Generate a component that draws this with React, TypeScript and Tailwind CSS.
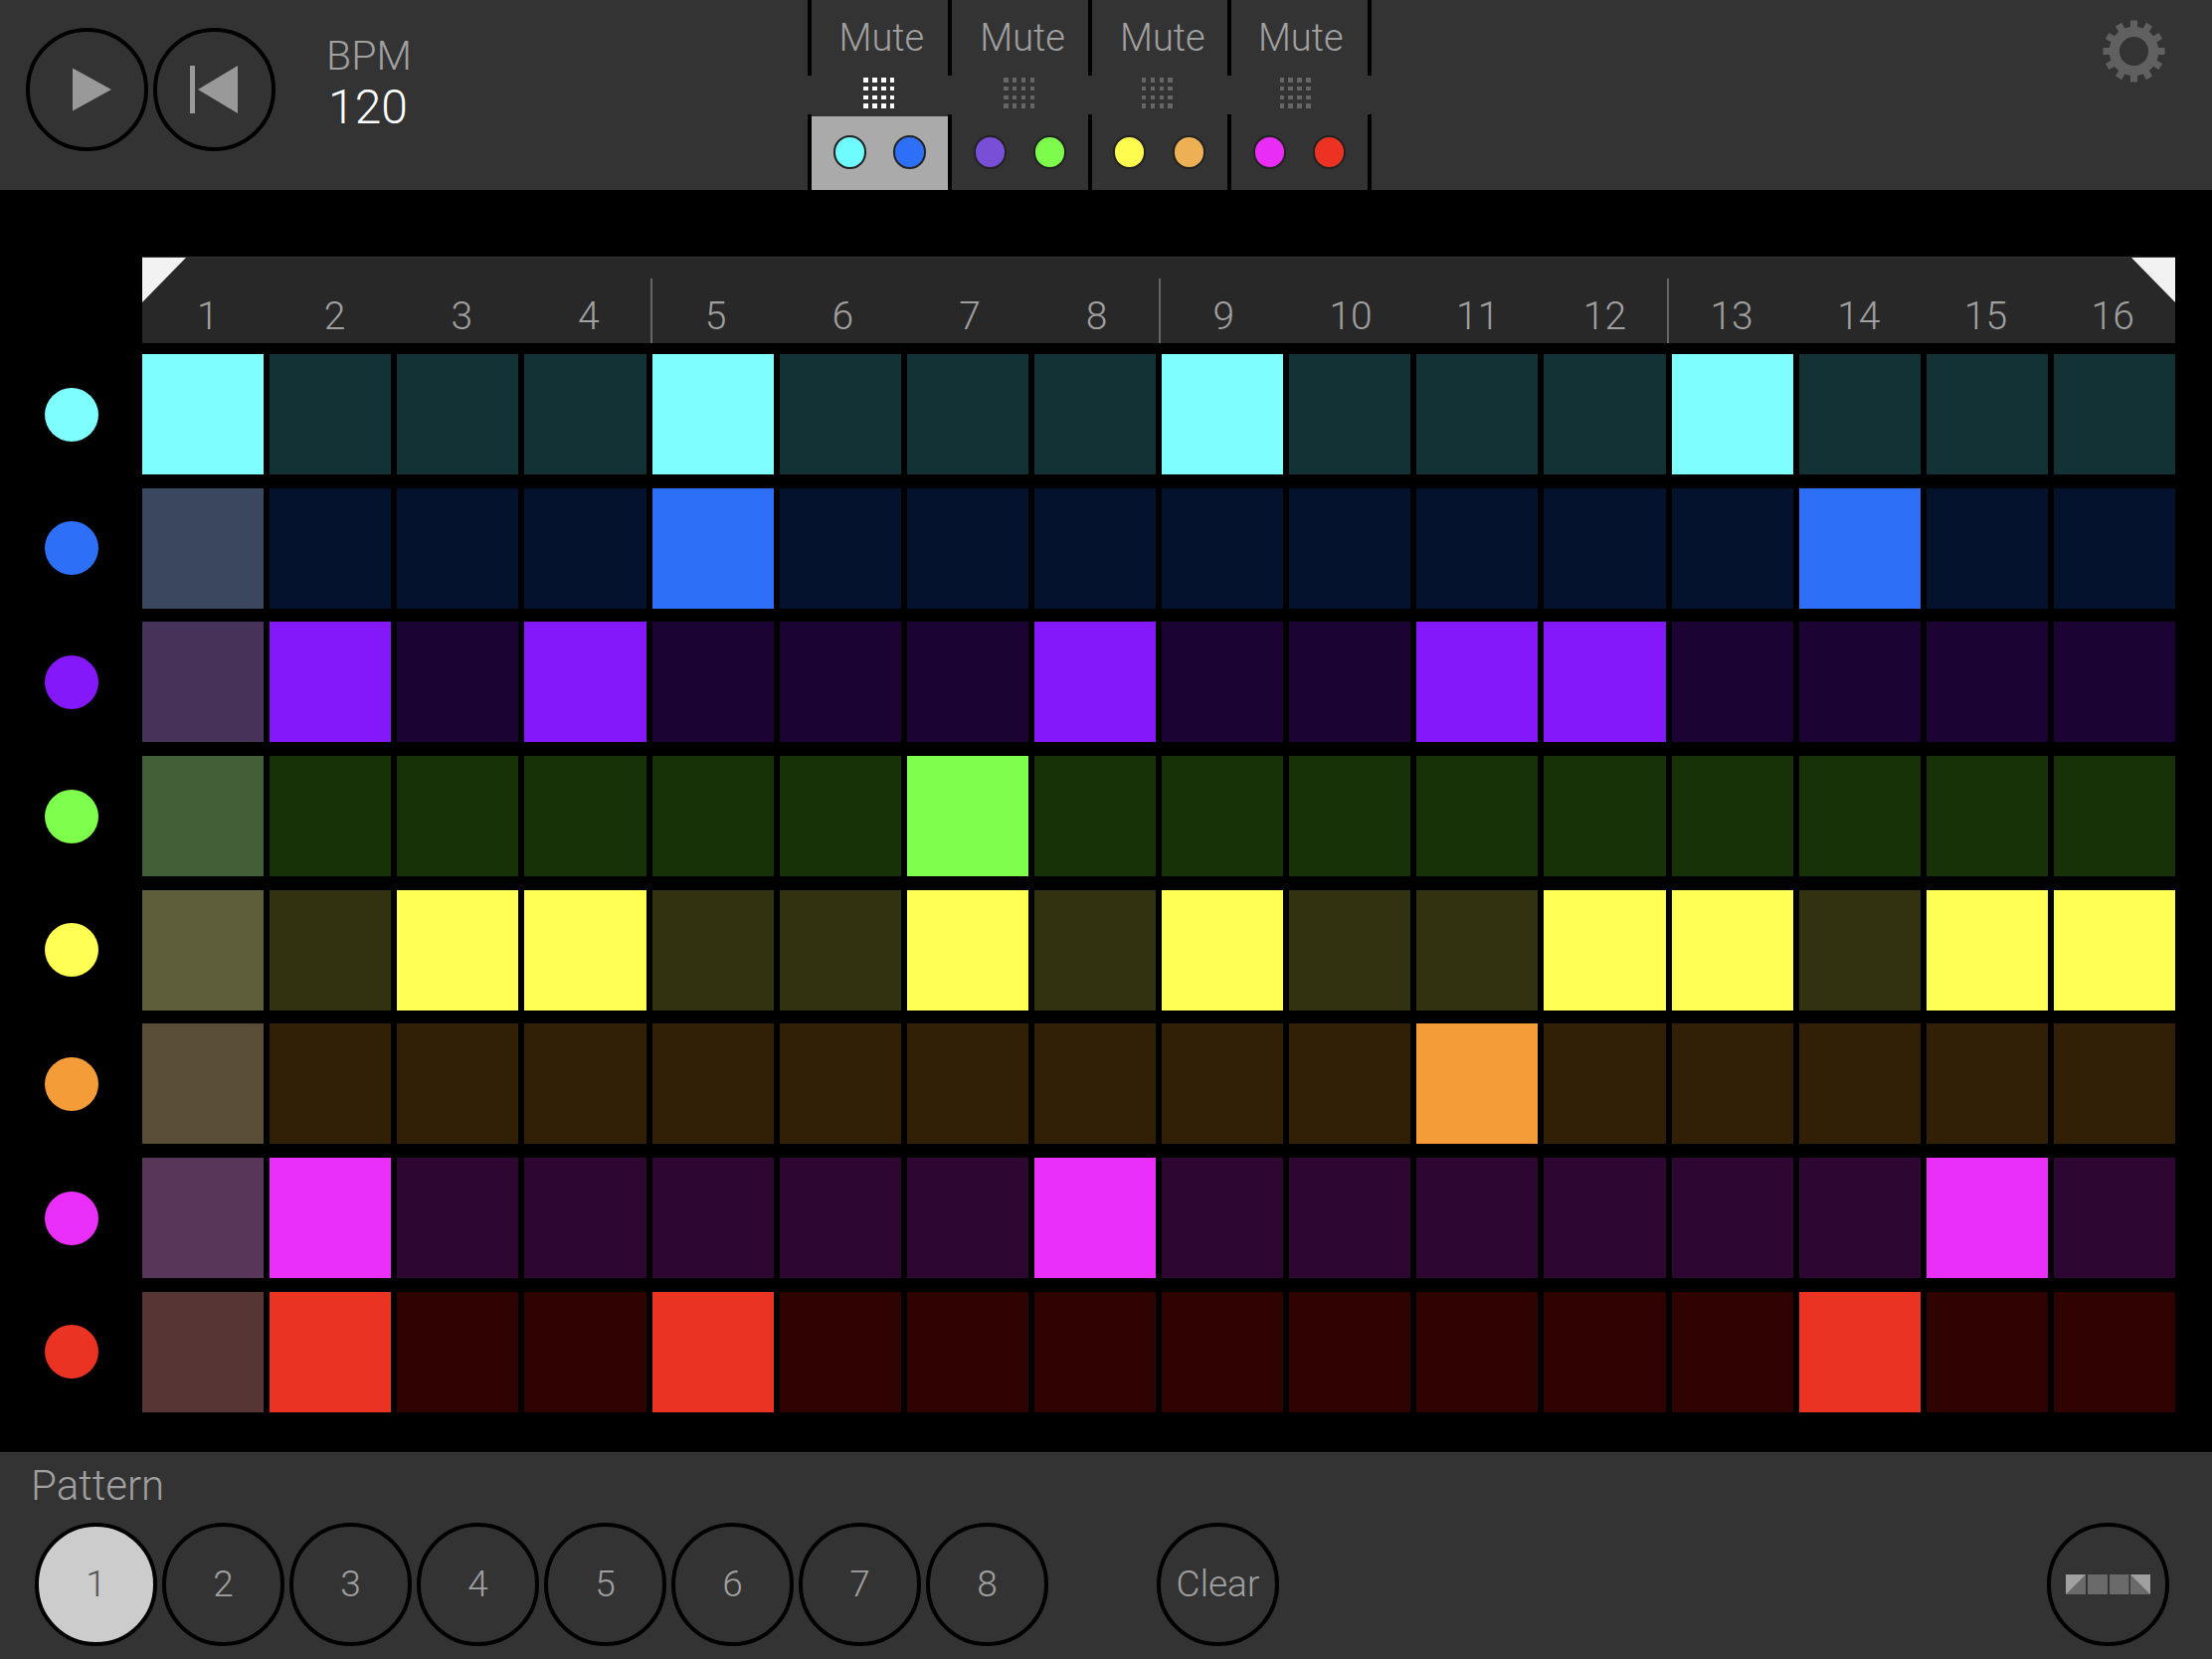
const font = "font-['Roboto','Helvetica_Neue',sans-serif] font-light";

const tracks = [
  { dot: "bg-[#7ffeff]", on: "bg-[#7ffeff]", off: "bg-[#133235]", head: "bg-[#7ffeff]", steps: [1, 5, 9, 13] },
  { dot: "bg-[#2e6ff8]", on: "bg-[#2e6ff8]", off: "bg-[#04122e]", head: "bg-[#3a475e]", steps: [5, 14] },
  { dot: "bg-[#8518f8]", on: "bg-[#8518f8]", off: "bg-[#1b0334]", head: "bg-[#473359]", steps: [2, 4, 8, 11, 12] },
  { dot: "bg-[#7eff4d]", on: "bg-[#7eff4d]", off: "bg-[#183208]", head: "bg-[#425f38]", steps: [7] },
  { dot: "bg-[#ffff54]", on: "bg-[#ffff54]", off: "bg-[#333210]", head: "bg-[#5e5e3a]", steps: [3, 4, 7, 9, 12, 13, 15, 16] },
  { dot: "bg-[#f39c38]", on: "bg-[#f39c38]", off: "bg-[#312006]", head: "bg-[#5a4d37]", steps: [11] },
  { dot: "bg-[#ea2ffa]", on: "bg-[#ea2ffa]", off: "bg-[#2e0632]", head: "bg-[#57365a]", steps: [2, 8, 15] },
  { dot: "bg-[#ea3323]", on: "bg-[#ea3323]", off: "bg-[#2f0301]", head: "bg-[#573534]", steps: [2, 5, 14] },
];

const mutes = [
  { text: "pl-[4px]", grid: "ml-[3px]", colors: ["bg-[#6ffcff]", "bg-[#2e6ff8]"], active: true },
  { text: "pl-[6px]", grid: "ml-[3px]", colors: ["bg-[#7a4fd8]", "bg-[#7dfc4c]"], active: false },
  { text: "pl-[6px]", grid: "mr-[1px]", colors: ["bg-[#fffc50]", "bg-[#eeb055]"], active: false },
  { text: "pl-[2px]", grid: "mr-[5px]", colors: ["bg-[#e92cf6]", "bg-[#ec3323]"], active: false },
];

const steps = Array.from({ length: 16 }, (_, i) => i + 1);

function Circle({ children, className = "text-[#a0a0a0]" }: { children?: React.ReactNode; className?: string }) {
  return (
    <button
      className={`flex h-[124px] w-[123px] shrink-0 items-center justify-center rounded-full border-[4px] border-black text-[37px] ${className}`}
    >
      {children}
    </button>
  );
}

function GridIcon({ active }: { active: boolean }) {
  return (
    <div className="grid w-[31px] grid-cols-4 gap-x-[4.3px] gap-y-[4.3px]">
      {Array.from({ length: 16 }, (_, i) => (
        <div key={i} className={`h-[4.5px] w-[4.5px] ${active ? "bg-white" : "bg-[#666666]"}`} />
      ))}
    </div>
  );
}

function Gear() {
  return (
    <svg viewBox="0 0 64 64" className="h-[63px] w-[63px]">
      <circle cx="32" cy="32" r="20" fill="none" stroke="#606060" strokeWidth="10.5" />
      {Array.from({ length: 12 }, (_, i) => (
        <rect key={i} x="28.4" y="0.5" width="7.2" height="10" fill="#606060" transform={`rotate(${i * 30} 32 32)`} />
      ))}
    </svg>
  );
}

function TopBar() {
  return (
    <div className="flex h-[191px] bg-[#333333]">
      <div className="flex gap-[5px] pl-[26px] pt-[28px]">
        <Circle>
          <svg viewBox="0 0 40 44" className="ml-[10px] h-[44px] w-[39px]">
            <polygon points="0,0 40,22 0,44" fill="#999999" />
          </svg>
        </Circle>
        <Circle>
          <svg viewBox="0 0 48 48" className="mr-[2px] h-[48px] w-[48px]">
            <rect x="0" y="0" width="5" height="48" fill="#999999" />
            <polygon points="48,0 48,48 8,24" fill="#999999" />
          </svg>
        </Circle>
      </div>
      <div className="ml-[51px] w-[90px] pt-[32px]">
        <div className="text-[41px] leading-[48px] text-[#a0a0a0]">BPM</div>
        <div className="pl-[2px] text-[48px] leading-[56px] text-white">120</div>
      </div>
      <div className="ml-[394px] flex">
        {mutes.map((m, i) => (
          <div key={i} className="w-[140.75px]">
            <div className={`flex h-[76px] items-center justify-center border-l-[4.5px] border-black text-[38px] text-[#a0a0a0] ${m.text} ${i === 3 ? "w-[145px] border-r-[4.5px]" : ""}`}>
              Mute
            </div>
            <div className="flex h-[39px] items-start justify-center pt-[2px]">
              <div className={m.grid}>
                <GridIcon active={m.active} />
              </div>
            </div>
            <div className={`h-[76px] border-l-[4.5px] border-black pt-[2px] ${i === 3 ? "w-[145px] border-r-[4.5px]" : ""}`}>
              <div className={`flex h-[74px] items-start justify-center gap-[27px] pt-[19px] ${m.active ? "bg-[#aaaaaa]" : ""}`}>
                {m.colors.map((c) => (
                  <div key={c} className={`h-[34px] w-[33px] rounded-full border-[2.5px] border-[#222222] ${c}`} />
                ))}
              </div>
            </div>
          </div>
        ))}
      </div>
      <div className="ml-auto pr-[47px] pt-[20px]">
        <Gear />
      </div>
    </div>
  );
}

function Sequencer() {
  return (
    <div className="h-[1269px] bg-black pt-[67px]">
      <div className="relative ml-[143px] flex h-[87px] w-[2044px] border-t-[1px] border-[#333333] bg-[#282828] pl-[3.5px] pr-[3.5px]">
        <svg viewBox="0 0 44 45" className="absolute left-0 top-0 h-[45px] w-[44px]">
          <polygon points="0,0 44,0 0,45" fill="#f2f2f2" />
        </svg>
        <svg viewBox="0 0 44 45" className="absolute right-0 top-0 h-[45px] w-[44px]">
          <polygon points="0,0 44,0 44,45" fill="#f2f2f2" />
        </svg>
        <div className="grid flex-1 grid-cols-16 gap-x-[6px]">
          {steps.map((n) => (
            <div key={n} className="relative flex items-end justify-center pb-[3px] text-[39px] leading-[48px] text-[#a0a0a0]">
              <span className="pl-[3px]">{n}</span>
              {n % 4 === 0 && n < 16 && <div className="absolute bottom-0 right-[-5px] top-[21px] w-[2px] bg-[#666666]" />}
            </div>
          ))}
        </div>
      </div>
      <div className="mt-[11px] flex flex-col gap-[13.7px]">
        {tracks.map((t, row) => (
          <div key={row} className="flex items-center">
            <div className="flex w-[143px] justify-center">
              <div className={`h-[54px] w-[54px] rounded-full ${t.dot}`} />
            </div>
            <div className="grid w-[2044px] grid-cols-16 gap-x-[6px]">
              {steps.map((n) => (
                <div
                  key={n}
                  className={`h-[121px] ${t.steps.includes(n) ? t.on : n === 1 ? t.head : t.off}`}
                />
              ))}
            </div>
          </div>
        ))}
      </div>
    </div>
  );
}

function BottomBar() {
  return (
    <div className="h-[208px] border-t-[1px] border-[#3a3a3a] bg-[#333333] pl-[31px]">
      <div className="pt-[9px] text-[42px] leading-[48px] text-[#a0a0a0]">Pattern</div>
      <div className="mt-[13px] flex items-center">
        <div className="ml-[4px] flex gap-[5px]">
          {[1, 2, 3, 4, 5, 6, 7, 8].map((n) => (
            <Circle key={n} className={n === 1 ? "bg-[#cccccc] text-[#555555]" : "text-[#a0a0a0]"}>
              {n}
            </Circle>
          ))}
        </div>
        <Circle className="ml-[109px] text-[#a0a0a0]">Clear</Circle>
        <Circle className="ml-auto mr-[43px]">
          <svg viewBox="0 0 85 20" className="h-[20px] w-[85px]">
            <rect x="0" y="0" width="20" height="20" fill="#6a6a6a" />
            <polygon points="0,0 20,0 0,20" fill="#a0a0a0" />
            <rect x="22" y="0" width="20" height="20" fill="#6a6a6a" />
            <rect x="44" y="0" width="19.5" height="20" fill="#6a6a6a" />
            <rect x="65" y="0" width="20" height="20" fill="#6a6a6a" />
            <polygon points="65,0 85,0 85,20" fill="#a0a0a0" />
          </svg>
        </Circle>
      </div>
    </div>
  );
}

export default function App() {
  return (
    <div className={`h-[1668px] w-[2224px] overflow-hidden bg-black ${font}`}>
      <TopBar />
      <Sequencer />
      <BottomBar />
    </div>
  );
}
